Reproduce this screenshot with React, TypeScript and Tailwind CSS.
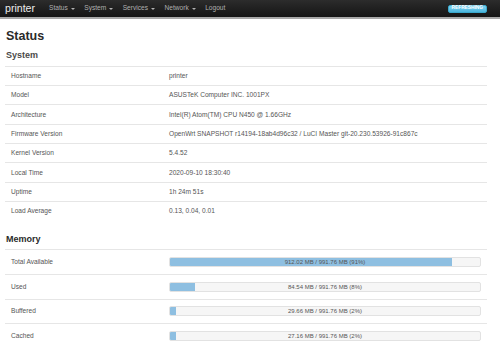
const menu = ["Status", "System", "Services", "Network"];

const system = [
  { label: "Hostname", value: "printer" },
  { label: "Model", value: "ASUSTeK Computer INC. 1001PX" },
  { label: "Architecture", value: "Intel(R) Atom(TM) CPU N450 @ 1.66GHz" },
  {
    label: "Firmware Version",
    value: "OpenWrt SNAPSHOT r14194-18ab4d96c32 / LuCI Master git-20.230.53926-91c867c",
  },
  { label: "Kernel Version", value: "5.4.52" },
  { label: "Local Time", value: "2020-09-10 18:30:40" },
  { label: "Uptime", value: "1h 24m 51s" },
  { label: "Load Average", value: "0.13, 0.04, 0.01" },
];

const memory = [
  { label: "Total Available", used: "912.02 MB", pct: 91 },
  { label: "Used", used: "84.54 MB", pct: 8 },
  { label: "Buffered", used: "29.66 MB", pct: 2 },
  { label: "Cached", used: "27.16 MB", pct: 2 },
];

const App = () => {
  return (
    <div className="w-[500px] h-[356px] overflow-hidden bg-white font-['Liberation_Sans',Arial,sans-serif] text-[#555]">
      {/* topbar */}
      <div className="h-[19px] border-b-2 border-[#a8a8a8] bg-gradient-to-b from-[#2c2c2c] to-[#151515] flex items-center pl-[5px] pr-[13px]">
        <div className="text-[10.6px] leading-none text-[#ececec] mr-[14px]">printer</div>
        <div className="flex items-center gap-[9.5px] text-[6.6px] leading-none text-[#b0b0b0]">
          {menu.map((m) => (
            <div key={m} className="flex items-center">
              {m}
              <span className="ml-[3px] mt-[1px] w-0 h-0 border-l-[2px] border-r-[2px] border-t-[2px] border-l-transparent border-r-transparent border-t-[#b0b0b0]"></span>
            </div>
          ))}
          <div>Logout</div>
        </div>
        <div className="ml-auto h-[8px] px-[3px] flex items-center rounded-[2px] border border-[#3aa8cc] bg-gradient-to-b from-[#7fd2ef] to-[#4ab6de] text-[4.8px] font-bold text-white leading-none">
          REFRESHING
        </div>
      </div>

      <div className="pl-[5px] w-[487px]">
        <h2 className="mt-[8px] h-[18px] leading-[18px] text-[12.5px] font-bold pl-[1px] text-[#2a2a2a]">Status</h2>
        <h3 className="mt-[4px] h-[13px] leading-[13px] text-[9px] font-bold pl-[1px] text-[#4a4a4a]">System</h3>

        <div className="mt-[3.5px]">
          {system.map((r) => (
            <div key={r.label} className="h-[19.4px] border-t border-[#e6e6e6] flex items-center text-[6.6px]">
              <div className="w-[158px] pl-[6px]">{r.label}</div>
              <div className="pl-[6px] whitespace-nowrap">{r.value}</div>
            </div>
          ))}
        </div>

        <h3 className="mt-[12.5px] h-[13px] leading-[13px] text-[9px] font-bold pl-[1px] text-[#2a2a2a]">Memory</h3>

        <div className="mt-[3px]">
          {memory.map((r) => (
            <div key={r.label} className="h-[24.7px] border-t border-[#e6e6e6] flex items-center text-[6.6px]">
              <div className="w-[158px] pl-[6px]">{r.label}</div>
              <div className="flex-1 pl-[6px] pr-[6px]">
                <div className="relative h-[10px] rounded-[2px] border border-[#e2e2e2] bg-[#f6f6f6] overflow-hidden">
                  <div className="h-full bg-[#8ebfe1]" style={{ width: `${r.pct}%` }}></div>
                  <div className="absolute inset-0 flex items-center justify-center text-[6px] text-[#555] leading-none">
                    {r.used} / 991.76 MB ({r.pct}%)
                  </div>
                </div>
              </div>
            </div>
          ))}
        </div>
      </div>
    </div>
  );
};

export default App;
